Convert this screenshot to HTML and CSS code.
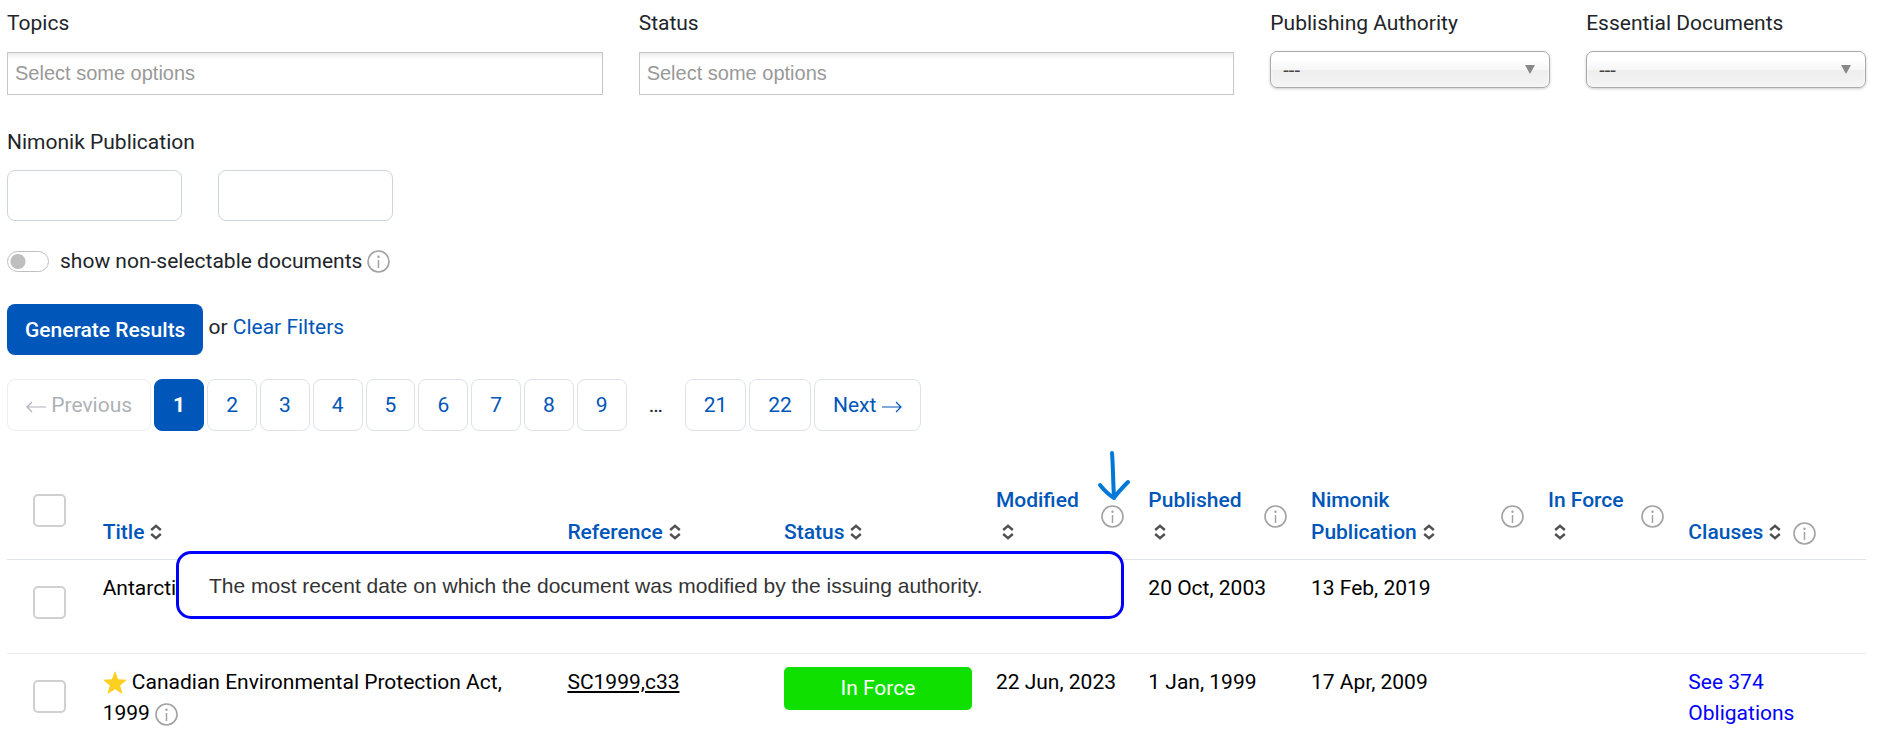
FILE: index.html
```
<!DOCTYPE html>
<html lang="en">
<head>
    <meta charset="UTF-8">
    <meta name="viewport" content="width=device-width, initial-scale=1.0">
    <title>Documents</title>
    <link rel="stylesheet" href="styles.css">
</head>
<body>
    <!-- Shared icons -->
    <svg class="sprite" aria-hidden="true">
        <symbol id="icon-info" viewBox="0 0 23 23">
            <circle cx="11.5" cy="11.5" r="10.5" fill="none" stroke="#a3a3a3" stroke-width="1.6"/>
            <circle cx="11.5" cy="6.8" r="1.2" fill="#a3a3a3"/>
            <path d="M11.5 10v8" fill="none" stroke="#a3a3a3" stroke-width="1.5"/>
        </symbol>
        <symbol id="icon-sort" viewBox="0 0 12 16">
            <path d="M1.2 6L6 1.8L10.8 6M1.2 10L6 14.2L10.8 10" fill="none" stroke="#505050" stroke-width="2.4"/>
        </symbol>
        <symbol id="icon-star" viewBox="0 0 24 23">
            <path d="M12 0l3.2 8.2 8.8.6-6.8 5.6 2.3 8.6L12 18.2 4.500 23l2.300-8.600L0 8.800l8.800-.6z" fill="#fbd021"/>
        </symbol>
    </svg>

    <main>
        <form class="filters">
            <div class="filter-row">
                <div class="field field-wide">
                    <label for="topics">Topics</label>
                    <input type="text" id="topics" class="chosen" placeholder="Select some options">
                </div>
                <div class="field field-wide">
                    <label for="status">Status</label>
                    <input type="text" id="status" class="chosen" placeholder="Select some options">
                </div>
                <div class="field">
                    <label for="authority">Publishing Authority</label>
                    <div class="select-wrap">
                        <select id="authority"><option>---</option></select>
                    </div>
                </div>
                <div class="field">
                    <label for="essential">Essential Documents</label>
                    <div class="select-wrap">
                        <select id="essential"><option>---</option></select>
                    </div>
                </div>
            </div>

            <div class="field">
                <label for="date-from">Nimonik Publication</label>
                <div class="date-range">
                    <input type="text" id="date-from" class="date-input">
                    <input type="text" id="date-to" class="date-input" aria-label="Nimonik Publication to">
                </div>
            </div>

            <div class="toggle-row">
                <input type="checkbox" id="non-selectable" class="toggle">
                <label for="non-selectable">show non-selectable documents</label>
                <svg class="info"><use href="#icon-info"/></svg>
            </div>

            <div class="actions">
                <button type="submit" class="btn">Generate Results</button>
                <span>or <a href="#">Clear Filters</a></span>
            </div>
        </form>

        <nav class="pagination" aria-label="Pages">
            <span class="page disabled"><svg class="arrow" viewBox="0 0 20 12"><path d="M20 6H1M6 1L1 6l5 5"/></svg> Previous</span>
            <a href="#" class="page current" aria-current="page">1</a>
            <a href="#" class="page">2</a>
            <a href="#" class="page">3</a>
            <a href="#" class="page">4</a>
            <a href="#" class="page">5</a>
            <a href="#" class="page">6</a>
            <a href="#" class="page">7</a>
            <a href="#" class="page">8</a>
            <a href="#" class="page">9</a>
            <span class="page gap">…</span>
            <a href="#" class="page">21</a>
            <a href="#" class="page">22</a>
            <a href="#" class="page">Next <svg class="arrow" viewBox="0 0 20 12"><path d="M0 6h19M14 1l5 5-5 5"/></svg></a>
        </nav>

        <div class="results">
            <table>
                <colgroup>
                    <col class="col-check">
                    <col class="col-title">
                    <col class="col-reference">
                    <col class="col-status">
                    <col class="col-modified">
                    <col class="col-published">
                    <col class="col-nimonik">
                    <col class="col-force">
                    <col class="col-clauses">
                </colgroup>
                <thead>
                    <tr>
                        <th class="check"><input type="checkbox" aria-label="Select all"></th>
                        <th><a href="#">Title</a><svg class="sort"><use href="#icon-sort"/></svg></th>
                        <th><a href="#">Reference</a><svg class="sort"><use href="#icon-sort"/></svg></th>
                        <th><a href="#">Status</a><svg class="sort"><use href="#icon-sort"/></svg></th>
                        <th>
                            <div class="th-info">
                                <div><a href="#">Modified</a><br><svg class="sort"><use href="#icon-sort"/></svg></div>
                                <span class="marked">
                                    <svg class="info"><use href="#icon-info"/></svg>
                                    <svg class="pointer" viewBox="0 0 34 52"><path d="M15 3C16 14 16 30 17 48M3 35C7 40 12 45 17 48C21 42 26 37 31 32"/></svg>
                                </span>
                            </div>
                        </th>
                        <th>
                            <div class="th-info">
                                <div><a href="#">Published</a><br><svg class="sort"><use href="#icon-sort"/></svg></div>
                                <svg class="info"><use href="#icon-info"/></svg>
                            </div>
                        </th>
                        <th>
                            <div class="th-info">
                                <div><a href="#">Nimonik<br>Publication</a><svg class="sort"><use href="#icon-sort"/></svg></div>
                                <svg class="info"><use href="#icon-info"/></svg>
                            </div>
                        </th>
                        <th>
                            <div class="th-info">
                                <div><a href="#">In Force</a><br><svg class="sort"><use href="#icon-sort"/></svg></div>
                                <svg class="info"><use href="#icon-info"/></svg>
                            </div>
                        </th>
                        <th><a href="#">Clauses</a><svg class="sort"><use href="#icon-sort"/></svg> <svg class="info"><use href="#icon-info"/></svg></th>
                    </tr>
                </thead>
                <tbody>
                    <tr>
                        <td class="check"><input type="checkbox" aria-label="Select Antarctic"></td>
                        <td>Antarcti</td>
                        <td></td>
                        <td></td>
                        <td></td>
                        <td>20 Oct, 2003</td>
                        <td>13 Feb, 2019</td>
                        <td></td>
                        <td></td>
                    </tr>
                    <tr>
                        <td class="check"><input type="checkbox" aria-label="Select Canadian Environmental Protection Act, 1999"></td>
                        <td><svg class="star"><use href="#icon-star"/></svg> Canadian Environmental Protection Act, 1999 <svg class="info"><use href="#icon-info"/></svg></td>
                        <td><a href="#" class="reference">SC1999,c33</a></td>
                        <td><span class="badge">In Force</span></td>
                        <td>22 Jun, 2023</td>
                        <td>1 Jan, 1999</td>
                        <td>17 Apr, 2009</td>
                        <td></td>
                        <td><a href="#" class="clauses">See 374 Obligations</a></td>
                    </tr>
                </tbody>
            </table>
            <div class="tooltip" role="tooltip">The most recent date on which the document was modified by the issuing authority.</div>
        </div>
    </main>
</body>
</html>
```
FILE: styles.css
```
/* General Styles */
* {
    margin: 0;
    padding: 0;
    box-sizing: border-box;
}

body {
    font-family: Roboto, sans-serif;
    font-size: 21px;
    line-height: 31px;
    color: #212529;
    background: #fff;
}

main {
    padding: 8px 11px 0 7px;
}

a {
    color: #0056b9;
    text-decoration: none;
}

.sprite {
    display: none;
}

.info {
    width: 23px;
    height: 23px;
    flex: none;
    vertical-align: -6px;
}

/* Filters */
.filter-row {
    display: grid;
    grid-template-columns: repeat(6, 1fr);
    column-gap: 36px;
    margin-bottom: 32px;
}

.field-wide {
    grid-column: span 2;
}

.field label {
    display: block;
    margin-bottom: 12px;
}

.chosen {
    display: block;
    width: 100%;
    height: 43px;
    margin-top: 13px;
    padding: 0 7px;
    border: 1px solid #c6c6c6;
    background: linear-gradient(#eee 1%, #fff 15%);
    font: 20px "Liberation Sans", Arial, sans-serif;
    color: #333;
}

.chosen::placeholder {
    color: #999;
}

.select-wrap {
    position: relative;
}

.select-wrap::after {
    content: "";
    position: absolute;
    right: 15px;
    top: 14px;
    border: 5px solid transparent;
    border-top: 9px solid #888;
    border-bottom: 0;
    pointer-events: none;
}

select {
    display: block;
    width: 100%;
    height: 37px;
    padding: 0 12px;
    appearance: none;
    border: 1px solid #aaa;
    border-radius: 7px;
    background: linear-gradient(#fff 20%, #f6f6f6 50%, #eee 52%, #f4f4f4 100%);
    box-shadow: 0 0 3px #fff inset, 0 1px 3px rgba(0, 0, 0, 0.2);
    font: 20px Roboto, sans-serif;
    color: #444;
}

.date-range {
    display: flex;
    gap: 36px;
}

.date-input {
    width: 175px;
    height: 51px;
    padding: 0 12px;
    border: 1px solid #ced4da;
    border-radius: 8px;
    font: inherit;
}

.toggle-row {
    display: flex;
    align-items: center;
    margin-top: 25px;
}

.toggle-row label {
    margin: 0 5px 0 11px;
}

.toggle {
    appearance: none;
    width: 42px;
    height: 21px;
    border: 1px solid #bfbfbf;
    border-radius: 11px;
    background: radial-gradient(circle at 10px 50%, #bfbfbf 7px, transparent 8px);
}

.actions {
    display: flex;
    gap: 5px;
    margin-top: 27px;
}

.actions span {
    padding-top: 8px;
}

.btn {
    height: 51px;
    padding: 0 18px;
    border: 0;
    border-radius: 8px;
    background: #0056b9;
    color: #fff;
    font: 500 21px Roboto, sans-serif;
    cursor: pointer;
}

/* Pagination */
.pagination {
    display: flex;
    gap: 3px;
    margin-top: 24px;
}

.page {
    padding: 10px 18px;
    border: 1px solid #dee2e6;
    border-radius: 8px;
    line-height: 30px;
}

.page.disabled {
    border-color: #eceef0;
    color: #adb2b8;
}

.page.current {
    border-color: #0056b9;
    background: #0056b9;
    color: #fff;
    font-weight: 700;
}

.page.gap {
    border-color: transparent;
}

.arrow {
    width: 20px;
    height: 12px;
    fill: none;
    stroke: currentColor;
    stroke-width: 1.2;
    vertical-align: -1px;
}

/* Results */
.results {
    position: relative;
    margin-top: 46px;
}

table {
    width: 100%;
    table-layout: fixed;
    border-collapse: collapse;
    color: #000;
}

.col-check { width: 4.5%; }
.col-title { width: 25%; }
.col-reference { width: 11.65%; }
.col-status { width: 11.4%; }
.col-modified { width: 8.2%; }
.col-published { width: 8.75%; }
.col-nimonik { width: 12.75%; }
.col-force { width: 7.55%; }
.col-clauses { width: 10.2%; }

th,
td {
    padding: 13px 12px 12px;
    text-align: left;
}

th {
    padding: 7px 12px 11px;
    border-bottom: 1px solid #dee2e6;
    vertical-align: bottom;
    font-weight: 500;
    line-height: 32px;
}

td {
    height: 94px;
    border-bottom: 1px solid #ececec;
    vertical-align: top;
}

tbody tr:last-child td {
    border-bottom: 0;
}

.check {
    padding: 12px 12px 20px 26px;
    vertical-align: middle;
}

th.check {
    padding-bottom: 27px;
}

.check input {
    display: block;
    appearance: none;
    width: 33px;
    height: 33px;
    border: 2px solid #d0d0d0;
    border-radius: 5px;
}

.th-info {
    display: flex;
    align-items: center;
    justify-content: space-between;
}

.sort {
    width: 12px;
    height: 16px;
    margin: 0 6px;
    vertical-align: -1px;
}

.star {
    width: 24px;
    height: 23px;
    vertical-align: -5px;
}

.reference {
    color: #000;
    text-decoration: underline;
}

.clauses {
    color: #00f;
}

.badge {
    display: block;
    border-radius: 5px;
    background: #0fe000;
    color: #fff;
    line-height: 43px;
    text-align: center;
}

.marked {
    position: relative;
    display: flex;
}

/* Hand-drawn arrow over the info icon */
.pointer {
    position: absolute;
    left: -4px;
    bottom: 26px;
    width: 34px;
    height: 52px;
    fill: none;
    stroke: #0078d7;
    stroke-width: 4;
    stroke-linecap: round;
    stroke-linejoin: round;
}

.tooltip {
    position: absolute;
    left: 169px;
    top: 74px;
    width: 51%;
    padding: 16px 30px 15px;
    border: 3px solid #00f;
    border-radius: 15px;
    background: #fff;
    font-family: "Liberation Sans", Arial, sans-serif;
    color: #333;
}
```
